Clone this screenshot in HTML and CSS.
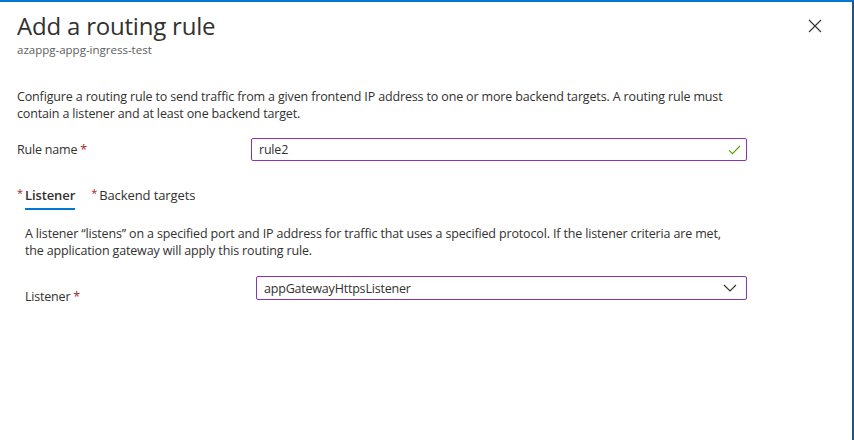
FILE: index.html
```html
<!DOCTYPE html>
<html lang="en">
<head>
<meta charset="utf-8">
<title>Add a routing rule</title>
<link rel="stylesheet" href="styles.css">
</head>
<body>
<div class="panel">
  <header class="header">
    <div class="titles">
      <h1 class="title">Add a routing rule</h1>
      <div class="subtitle">azappg-appg-ingress-test</div>
    </div>
    <button class="close" aria-label="Close">
      <svg width="14" height="14" viewBox="0 0 14 14"><path d="M1 1L13 13M13 1L1 13" stroke="#323130" stroke-width="1.1" fill="none"/></svg>
    </button>
  </header>
  <main class="content">
    <p class="desc">Configure a routing rule to send traffic from a given frontend IP address to one or more backend targets. A routing rule must contain a listener and at least one backend target.</p>
    <div class="field">
      <label class="label">Rule name <span class="req">*</span></label>
      <div class="input">
        <span class="value">rule2</span>
        <svg class="check" width="13" height="10" viewBox="0 0 13 10"><path d="M1 5.2L4.4 8.6L12 1" stroke="#57a300" stroke-width="1.1" fill="none"/></svg>
      </div>
    </div>
    <nav class="tabs">
      <div class="tab active"><span class="tab-req">*</span><span class="tab-text">Listener</span></div>
      <div class="tab"><span class="tab-req">*</span><span class="tab-text">Backend targets</span></div>
    </nav>
    <section class="tab-panel">
      <p class="desc">A listener “listens” on a specified port and IP address for traffic that uses a specified protocol. If the listener criteria are met, the application gateway will apply this routing rule.</p>
      <div class="field field-low">
        <label class="label">Listener <span class="req">*</span></label>
        <div class="input select">
          <span class="value">appGatewayHttpsListener</span>
          <svg class="chev" width="14" height="8" viewBox="0 0 14 8"><path d="M1 1L7 7L13 1" stroke="#323130" stroke-width="1.1" fill="none"/></svg>
        </div>
      </div>
    </section>
  </main>
</div>
</body>
</html>
```
FILE: styles.css
```css
* { box-sizing: border-box; }
html, body { margin: 0; padding: 0; background: #fff; }
body {
  font-family: "Open Sans", "Noto Sans", "Liberation Sans", sans-serif;
  color: #323130;
  font-size: 13px;
}
.panel {
  width: 854px;
  height: 440px;
  border-top: 2px solid #0078d4;
  border-right: 2px solid #24527e;
  overflow: hidden;
}
.header {
  display: flex;
  justify-content: space-between;
  align-items: flex-start;
  padding: 8px 30px 0 17px;
}
.title {
  margin: 0;
  font-size: 24px;
  font-weight: 400;
  line-height: 32px;
  letter-spacing: -0.2px;
  color: #323130;
}
.subtitle {
  font-size: 11.5px;
  line-height: 16px;
  color: #605e5c;
}
.close {
  background: none;
  border: 0;
  padding: 0;
  margin-top: 9px;
  width: 14px;
  height: 14px;
  display: flex;
}
.content {
  width: 854px;
  padding: 31px 0 0 17px;
}
.desc {
  margin: 0;
  max-width: 720px;
  font-size: 12.5px;
  line-height: 16.5px;
  letter-spacing: -0.15px;
}
.field {
  display: flex;
  align-items: center;
  margin-top: 16px;
}
.label {
  width: 234px;
  flex: none;
  font-size: 12.5px;
  letter-spacing: -0.2px;
}
.req { color: #a4262c; }
.input {
  width: 496px;
  height: 23px;
  border: 1px solid #8a34b3;
  border-radius: 2px;
  display: flex;
  align-items: center;
  justify-content: space-between;
  padding: 0 5px 0 7px;
  font-size: 12.5px;
  letter-spacing: -0.2px;
}
.tabs {
  display: flex;
  gap: 16px;
  margin-top: 25px;
}
.tab {
  display: flex;
  align-items: flex-start;
  font-size: 13px;
  letter-spacing: -0.1px;
  color: #323130;
  height: 24px;
}
.tab-req {
  color: #a4262c;
  font-size: 11px;
  line-height: 14px;
  margin-right: 2px;
}
.tab-text {
  line-height: 18px;
  height: 24px;
}
.tab.active .tab-text {
  font-weight: 600;
  border-bottom: 2px solid #0078d4;
}
.tab-panel {
  padding: 16px 0 0 8px;
}
.tab-panel .desc {
  max-width: 712px;
}
.field-low {
  align-items: flex-start;
  margin-top: 17px;
}
.field-low .label {
  width: 231px;
  padding-top: 12px;
}
.select { width: 491px; height: 24px; padding-right: 9px; }
```
